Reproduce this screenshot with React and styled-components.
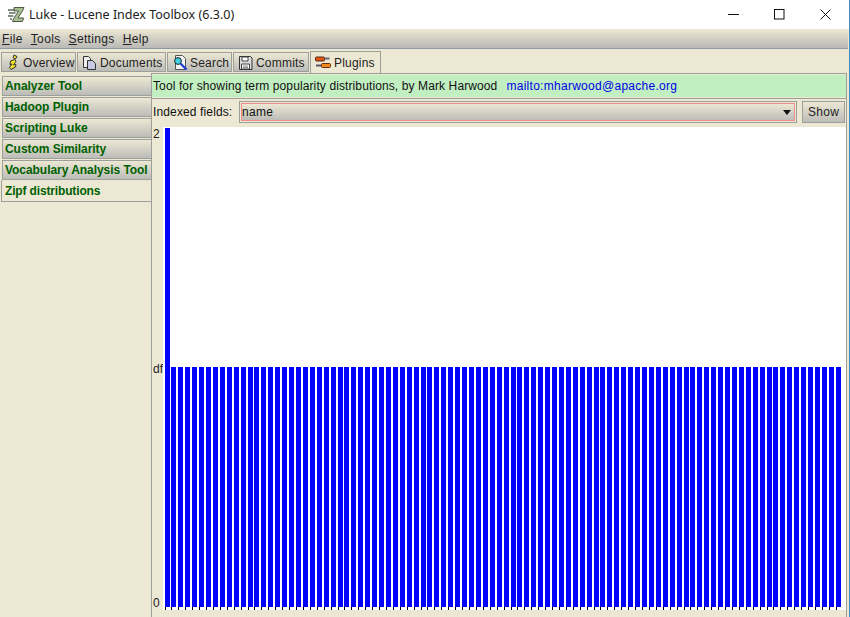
import React from 'react';
import styled, { createGlobalStyle } from 'styled-components';

const Global = createGlobalStyle`
  html, body { margin: 0; padding: 0; background: #fff; }
  * { box-sizing: border-box; }
`;

const Window = styled.div`
  width: 850px; height: 617px; display: flex; flex-direction: column; overflow: hidden;
  background: #ede8d4; font-family: "Liberation Sans", Arial, sans-serif; font-size: 12px; color: #111;
  border-right: 1px solid #3f8fc9;
`;
const TitleBar = styled.div`
  height: 29px; background: #fff; display: flex; align-items: center; padding-left: 8px;
`;
const TitleText = styled.span`
  font-family: "Noto Sans", "Noto Sans CJK SC", sans-serif; font-size: 12.5px; color: #222; margin-left: 4px; white-space: nowrap;
`;
const WinControls = styled.div`
  margin-left: auto; display: flex; align-items: center; margin-right: 1px;
`;
const WinButton = styled.div`
  width: 46px; height: 29px; display: flex; align-items: center; justify-content: center;
`;
const MenuBar = styled.div`
  height: 20px; display: flex; align-items: center; padding-left: 2px; gap: 8px;
  background: linear-gradient(#ede8d4, #b9b9b6); border-bottom: 1px solid #8f9ba2; margin-right: 1px;
`;
const MenuItem = styled.span`
  font-size: 12px; color: #222; letter-spacing: 0.35px;
  u { text-underline-offset: 1px; }
`;
const TabRow = styled.div`
  height: 23px; display: flex; align-items: flex-end; padding-left: 1px; gap: 1px; margin-right: 1px; position: relative; z-index: 1;
`;
const Tab = styled.div`
  width: ${p => p.$w}px; height: ${p => p.$active ? 22 : 20}px; display: flex; align-items: center; gap: ${p => p.$gap ?? 3}px; padding: 1px 0 0 4px; flex: none;
  border: 1.5px solid #9c9f9a; white-space: nowrap; color: #222; letter-spacing: 0.2px;
  border-bottom: ${p => p.$active ? 'none' : '1.5px solid #9c9f9a'};
  background: ${p => p.$active ? '#ede8d4' : 'linear-gradient(#ede8d4, #bcbcb8)'};
  margin-bottom: ${p => p.$active ? -1 : 0}px;
`;
const Body = styled.div`
  flex: 1; display: flex; min-height: 0; margin-right: 1px; padding-top: 1px;
`;
const Sidebar = styled.div`
  width: 152px; flex: none; padding-top: 3px; display: flex; flex-direction: column; gap: 1px; align-items: flex-end;
`;
const ToolButton = styled.div`
  width: 150px; height: 20px; padding-left: 2px; display: flex; align-items: center; font-weight: bold; color: #006000; font-size: 12px; letter-spacing: -0.05px;
  border: 1.5px solid #9c9f9a; white-space: nowrap; background: linear-gradient(#ede8d4, #bcbcb8);
`;
const ActiveTool = styled(ToolButton)`
  width: 151px; height: 22px; margin-top: -1px; background: #ede8d4; border-top: none; border-right: none; padding-left: 3px; letter-spacing: -0.15px;
`;
const Panel = styled.div`
  flex: 1; min-width: 0; display: flex; flex-direction: column;
  border-left: 1.5px solid #9c9f9a; border-top: 1.5px solid #9c9f9a; border-right: 1.5px solid #9c9f9a;
  padding-top: 1px; margin-left: -1px; margin-right: 1px;
`;
const InfoBar = styled.div`
  height: 22px; background: #c1efc1; display: flex; align-items: center; padding-left: 1px; white-space: nowrap; letter-spacing: 0.11px;
`;
const Divider = styled.div`
  height: 1px; background: #9c9f9a; margin-top: 1px;
`;
const MailLink = styled.span`
  color: #0000e6; margin-left: 9px; letter-spacing: 0.28px;
`;
const FieldRow = styled.div`
  height: 28px; display: flex; align-items: flex-start; padding: 2px 1px 0 1px;
`;
const FieldLabel = styled.span`
  white-space: nowrap; width: 86px; flex: none; line-height: 22px; letter-spacing: 0.13px;
`;
const Combo = styled.div`
  width: 558px; height: 22px; flex: none; border: 1.5px solid #9c9f9a; padding: 1px; background: #ede8d4;
`;
const ComboInner = styled.div`
  height: 100%; border: 1px solid #f08c8c; background: linear-gradient(#ede8d4, #bcbcb8); letter-spacing: 0.3px;
  display: flex; align-items: center; justify-content: space-between; padding: 0 3px 0 0;
`;
const ShowButton = styled.div`
  width: 43px; height: 22px; margin-left: 5px; flex: none; display: flex; align-items: center; justify-content: center;
  border: 1.5px solid #9c9f9a; background: linear-gradient(#ede8d4, #bcbcb8); color: #222; letter-spacing: 0.3px;
`;
const ChartRow = styled.div`
  flex: 1; display: flex; min-height: 0; margin-bottom: 7px;
`;
const Axis = styled.div`
  width: 11px; flex: none; display: flex; flex-direction: column; justify-content: space-between; align-items: flex-start; font-size: 12px; line-height: 14px; color: #222;
  padding-left: 1px;
`;
const Plot = styled.div`
  flex: 1; background: #fff; min-width: 0; padding-top: 1px; overflow: hidden;
`;

const Logo = () => (
  <svg width="17" height="18" viewBox="0 0 17 18">
    <path d="M6 1.5h10l-1 2.5-5 8h5.5l-1 3.5H4.5l1-2.5 5-8H6z" fill="#a9bf92" stroke="#4c5a48" strokeWidth="1" />
    <path d="M0 4h7M1 7h6.5M0 10h5.5M2 13h2" stroke="#5c6a58" strokeWidth="1.3" />
  </svg>
);
const Overview = () => (
  <svg width="14" height="17" viewBox="0 0 14 17">
    <path d="M8 1l3 1.5-1.5 2.5-2.5-1.5zM4.5 7l4.500-1.500 1 2-2.500 3.500 2.500-.5-.5 2.500-4.500 2.500-1.500-2 2.500-3.500-2 .5z" fill="#f2e22c" stroke="#333" strokeWidth="1" />
  </svg>
);
const Documents = () => (
  <svg width="15" height="16" viewBox="0 0 15 16">
    <path d="M1.500 1.500h5l2 2v9h-7z" fill="#eee" stroke="#333" />
    <path d="M5.500 5.500h5l3 3v6h-8z" fill="#c9c9e6" stroke="#333" />
  </svg>
);
const Search = () => (
  <svg width="17" height="17" viewBox="0 0 17 17">
    <path d="M3.500 1.500h7l3 3v11h-10z" fill="#f4f4f4" stroke="#555" />
    <circle cx="6" cy="7" r="3.400" fill="#3fd0e6" stroke="#222" />
    <path d="M8.500 9.500l6 6" stroke="#1f3fd0" strokeWidth="2.200" />
  </svg>
);
const Floppy = () => (
  <svg width="15" height="16" viewBox="0 0 15 16">
    <path d="M1.500 1.500h11l1.500 1.500v11.500h-12.500z" fill="#ddd" stroke="#333" />
    <path d="M4 2h6v4H4z" fill="#fff" stroke="#444" />
    <path d="M3.500 9h8v5h-8z" fill="#fff" stroke="#444" />
    <path d="M5 11h5M5 12.500h5" stroke="#888" />
  </svg>
);
const Plugins = () => (
  <svg width="16" height="14" viewBox="0 0 16 14">
    <rect x="0.500" y="1" width="9" height="4" rx="1" fill="#e0541a" stroke="#5a2a10" />
    <path d="M9.500 2.500h5" stroke="#667" strokeWidth="2" />
    <rect x="6.500" y="7.500" width="9" height="4" rx="1" fill="#f08a1a" stroke="#6a2a10" />
    <path d="M1 9.500h5" stroke="#556" strokeWidth="2" />
  </svg>
);

const BAR_COUNT = 98;
const Chart = () => {
  const W = 682, H = 483;
  const pitch = 6.92;
  const x0 = 2;
  const bars = Array.from({ length: BAR_COUNT }, (_, i) => i);
  return (
    <svg width={W} height={H} viewBox={`0 0 ${W} ${H}`} style={{ display: 'block' }}>
      {bars.map(i => (
        <rect key={i} x={Math.floor(x0 + i * pitch)} y={i === 0 ? 0 : 239} width="5" height={i === 0 ? 479 : 240} fill="#0000ff" />
      ))}
      {bars.map(i => (
        <rect key={i} x={Math.floor(x0 + i * pitch)} y="479" width="1" height={i % 10 === 0 ? 4 : 3} fill="#000" />
      ))}
    </svg>
  );
};

const tabs = [
  ['Overview', 75, <Overview />, 3], ['Documents', 89, <Documents />, 3], ['Search', 65, <Search />, 1], ['Commits', 76, <Floppy />, 3],
];
const tools = ['Analyzer Tool', 'Hadoop Plugin', 'Scripting Luke', 'Custom Similarity', 'Vocabulary Analysis Tool'];

export default function App() {
  return (
    <>
      <Global />
      <Window>
        <TitleBar>
          <Logo />
          <TitleText>Luke - Lucene Index Toolbox (6.3.0)</TitleText>
          <WinControls>
            <WinButton><svg width="11" height="11"><path d="M0 5.500h11" stroke="#111" /></svg></WinButton>
            <WinButton><svg width="11" height="11"><rect x=".5" y=".5" width="9.500" height="9.500" fill="none" stroke="#111" /></svg></WinButton>
            <WinButton><svg width="11" height="11"><path d="M.5.5l10 10M10.500.5l-10 10" stroke="#111" /></svg></WinButton>
          </WinControls>
        </TitleBar>
        <MenuBar>
          <MenuItem><u>F</u>ile</MenuItem>
          <MenuItem><u>T</u>ools</MenuItem>
          <MenuItem><u>S</u>ettings</MenuItem>
          <MenuItem><u>H</u>elp</MenuItem>
        </MenuBar>
        <TabRow>
          {tabs.map(([label, w, icon, gap]) => <Tab key={label} $w={w} $gap={gap}>{icon}{label}</Tab>)}
          <Tab $w={71} $active><Plugins />Plugins</Tab>
        </TabRow>
        <Body>
          <Sidebar>
            {tools.map(t => <ToolButton key={t}>{t}</ToolButton>)}
            <ActiveTool>Zipf distributions</ActiveTool>
          </Sidebar>
          <Panel>
            <InfoBar>
              Tool for showing term popularity distributions, by Mark Harwood
              <MailLink>mailto:mharwood@apache.org</MailLink>
            </InfoBar>
            <Divider />
            <FieldRow>
              <FieldLabel>Indexed fields:</FieldLabel>
              <Combo>
                <ComboInner>
                  name
                  <svg width="8" height="5"><path d="M0 0h8L4 5z" fill="#111" /></svg>
                </ComboInner>
              </Combo>
              <ShowButton>Show</ShowButton>
            </FieldRow>
            <ChartRow>
              <Axis><span>2</span><span>df</span><span>0</span></Axis>
              <Plot><Chart /></Plot>
            </ChartRow>
          </Panel>
        </Body>
      </Window>
    </>
  );
}
